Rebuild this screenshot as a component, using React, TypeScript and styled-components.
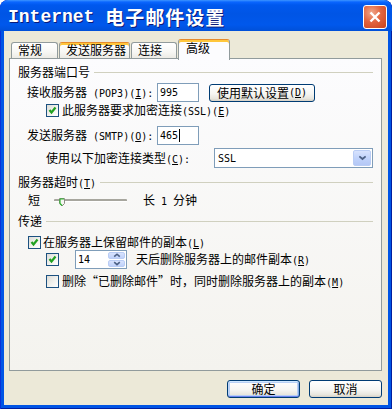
import React from "react";
import styled, { createGlobalStyle, css } from "styled-components";

const Global = createGlobalStyle`
  html, body { margin: 0; padding: 0; background: #ffffff; }
  body { font-family: "Noto Sans CJK SC", sans-serif; font-size: 12px; color: #000; }
`;

const Window = styled.div`
  width: 392px;
  height: 409px;
  box-sizing: border-box;
  background: #0055e5;
  border-radius: 8px 8px 0 0;
  display: flex;
  flex-direction: column;
  overflow: hidden;
  box-shadow: inset 1px 0 0 #0831d9, inset -1px 0 0 #001ea0, inset 0 -1px 0 #001ea0;
`;

const TitleBar = styled.div`
  height: 31px;
  flex: none;
  box-sizing: border-box;
  padding: 2px 5px 0 8px;
  display: flex;
  align-items: center;
  justify-content: space-between;
  background: linear-gradient(
    #3d95ff 0px,
    #0a66ff 2px,
    #0058ee 5px,
    #0055e5 45%,
    #0058ec 80%,
    #0050d8 100%
  );
  border-radius: 8px 8px 0 0;
`;

const Title = styled.div`
  color: #ffffff;
  font-weight: bold;
  text-shadow: 1px 1px 0 #0a1a7a;
  white-space: nowrap;
  display: flex;
  align-items: center;
`;

const TitleLatin = styled.span`
  font-family: "Liberation Mono", monospace;
  font-size: 18px;
  white-space: pre;
`;

const TitleCjk = styled.span`
  font-family: "Noto Sans CJK SC", sans-serif;
  font-size: 19px;
  letter-spacing: 1px;
`;

const CloseButton = styled.div`
  width: 24px;
  height: 24px;
  box-sizing: border-box;
  border: 1px solid #ffffff;
  border-radius: 3px;
  background: radial-gradient(circle at 35% 30%, #f0a88c 0%, #e2643f 45%, #c8421c 100%);
  display: flex;
  align-items: center;
  justify-content: center;
`;

const Client = styled.div`
  flex: 1;
  margin: 0 4px 4px 4px;
  background: #ece9d8;
  box-sizing: border-box;
  padding: 8px 6px 7px 5px;
  display: flex;
  flex-direction: column;
`;

const TabStrip = styled.div`
  height: 19px;
  flex: none;
  display: flex;
  align-items: flex-end;
  gap: 1px;
  padding-left: 2px;
  position: relative;
  z-index: 2;
`;

const Tab = styled.div<{ $active?: boolean; $hot?: boolean; $w: number }>`
  box-sizing: border-box;
  width: ${(p) => p.$w}px;
  height: ${(p) => (p.$active ? 21 : 16)}px;
  margin-bottom: ${(p) => (p.$active ? -2 : 0)}px;
  padding: 0 0 ${(p) => (p.$active ? 4 : 1)}px ${(p) => (p.$active ? 7 : 6)}px;
  border: 1px solid #919b9c;
  border-bottom: none;
  border-radius: 3px 3px 0 0;
  background: ${(p) =>
    p.$active ? "#fcfcfe" : "linear-gradient(#ffffff, #f7f7f4 60%, #ecebe5)"};
  display: flex;
  align-items: center;
  line-height: 1;
  white-space: nowrap;
  ${(p) =>
    (p.$active || p.$hot) &&
    css`
      border-top-color: #e68b2c;
      box-shadow: inset 0 2px 0 #ffc73c;
    `}
`;

const Panel = styled.div`
  height: 313px;
  flex: none;
  box-sizing: border-box;
  border: 1px solid #919b9c;
  background: linear-gradient(#fcfcfe, #f4f3ee);
  padding: 0 8px;
  display: flex;
  flex-direction: column;
  position: relative;
  z-index: 1;
`;

const GroupHeader = styled.div<{ $mt: number }>`
  height: 14px;
  margin-top: ${(p) => p.$mt}px;
  display: flex;
  align-items: center;
  white-space: nowrap;
`;

const GroupLine = styled.div`
  flex: 1;
  height: 1px;
  margin-left: 4px;
  background: #d0d0bf;
`;

const Row = styled.div<{ $h: number; $mt: number; $indent: number }>`
  height: ${(p) => p.$h}px;
  margin-top: ${(p) => p.$mt}px;
  padding-left: ${(p) => p.$indent}px;
  display: flex;
  align-items: center;
  white-space: nowrap;
`;

const Label = styled.span<{ $w?: number; $ml?: number }>`
  flex: none;
  white-space: nowrap;
  line-height: 1;
  ${(p) => (p.$w ? `width: ${p.$w}px;` : "")}
  margin-left: ${(p) => p.$ml ?? 0}px;
`;

const En = styled.span`
  font-family: "DejaVu Sans Mono", monospace;
  font-size: 10px;
  white-space: pre;
`;

const U = styled.span`
  text-decoration: underline;
  text-underline-offset: 1px;
`;

const Fw = styled.span`
  font-feature-settings: "fwid";
`;

const TextBox = styled.div<{ $w: number; $h: number }>`
  width: ${(p) => p.$w}px;
  height: ${(p) => p.$h}px;
  box-sizing: border-box;
  border: 1px solid #7f9db9;
  background: #ffffff;
  padding-left: 2px;
  display: flex;
  align-items: center;
  flex: none;
`;

const Caret = styled.span`
  display: inline-block;
  width: 1px;
  height: 13px;
  background: #000;
  margin-left: 1px;
`;

const XPButton = styled.div<{ $w: number; $h: number; $default?: boolean; $ml?: number }>`
  width: ${(p) => p.$w}px;
  height: ${(p) => p.$h}px;
  margin-left: ${(p) => p.$ml ?? 0}px;
  box-sizing: border-box;
  flex: none;
  border: 1px solid #003c74;
  border-radius: 3px;
  background: linear-gradient(#ffffff 0%, #f6f6f3 55%, #e8e6de 85%, #d6d0c5 100%);
  display: flex;
  align-items: center;
  justify-content: center;
  line-height: 1;
  white-space: nowrap;
  ${(p) =>
    p.$default &&
    css`
      box-shadow: inset 0 1px 0 #cee7ff, inset 0 -1px 0 #6982ee, inset 1px 0 0 #bcd4f6,
        inset -1px 0 0 #89ade4, inset 0 0 0 2px #b9d0f5;
    `}
`;

const Select = styled.div`
  width: 159px;
  height: 20px;
  box-sizing: border-box;
  border: 1px solid #7f9db9;
  background: #ffffff;
  display: flex;
  align-items: center;
  justify-content: space-between;
  padding: 0 1px 0 3px;
  flex: none;
`;

const DropButton = styled.div`
  width: 18px;
  height: 16px;
  box-sizing: border-box;
  border-radius: 2px;
  border: 1px solid #bacdf5;
  background: linear-gradient(#d8e3fd, #c1d3fb 50%, #b4c8f6);
  display: flex;
  align-items: center;
  justify-content: center;
`;

const Track = styled.div`
  width: 73px;
  height: 3px;
  margin-left: 14px;
  border-top: 2px solid #a7a69e;
  border-bottom: 1px solid #ffffff;
  box-sizing: border-box;
  border-radius: 1px;
  position: relative;
  flex: none;
`;

const Thumb = styled.svg`
  position: absolute;
  left: 5px;
  top: -3px;
`;

const CheckBox = styled.span`
  width: 13px;
  height: 13px;
  box-sizing: border-box;
  border: 1px solid #1c5180;
  background: linear-gradient(135deg, #dcdcd7 0%, #f4f4f0 60%, #ffffff 100%);
  display: inline-flex;
  align-items: center;
  justify-content: center;
  flex: none;
`;

const Spinner = styled.div`
  width: 52px;
  height: 19px;
  margin-left: 16px;
  box-sizing: border-box;
  border: 1px solid #7f9db9;
  background: #ffffff;
  display: flex;
  align-items: stretch;
  flex: none;
`;

const SpinText = styled.div`
  flex: 1;
  display: flex;
  align-items: center;
  padding-left: 2px;
`;

const SpinButtons = styled.div`
  width: 17px;
  display: flex;
  flex-direction: column;
  gap: 1px;
  padding: 1px 1px 1px 0;
`;

const SpinButton = styled.div`
  flex: 1;
  border-radius: 2px;
  background: linear-gradient(#d8e3fd, #bfd1fa);
  border: 1px solid #bacdf5;
  box-sizing: border-box;
  display: flex;
  align-items: center;
  justify-content: center;
`;

const Footer = styled.div`
  margin-top: 9px;
  display: flex;
  justify-content: flex-end;
  gap: 9px;
`;

const Check = ({ checked }: { checked?: boolean }) => (
  <CheckBox>
    {checked && (
      <svg width="11" height="11" viewBox="0 0 11 11">
        <polyline
          points="2.5,5 4.5,7.5 8.5,2.5"
          fill="none"
          stroke="#21a121"
          strokeWidth="2.2"
        />
      </svg>
    )}
  </CheckBox>
);

const Chevron = ({ down, size }: { down?: boolean; size: number }) => (
  <svg width={size} height={size * 0.6} viewBox="0 0 10 6">
    <polyline
      points={down ? "1.5,1.5 5,4.5 8.5,1.5" : "1.5,4.5 5,1.5 8.5,4.5"}
      fill="none"
      stroke="#4d6185"
      strokeWidth="2"
    />
  </svg>
);

export default function App() {
  return (
    <>
      <Global />
      <Window>
        <TitleBar>
          <Title>
            <TitleLatin>Internet </TitleLatin>
            <TitleCjk>电子邮件设置</TitleCjk>
          </Title>
          <CloseButton>
            <svg width="14" height="14" viewBox="0 0 14 14">
              <path d="M2.5 2.5 L11.5 11.5 M11.5 2.5 L2.5 11.5" stroke="#ffffff" strokeWidth="2.4" />
            </svg>
          </CloseButton>
        </TitleBar>
        <Client>
          <TabStrip>
            <Tab $w={47}>常规</Tab>
            <Tab $w={71} $hot>发送服务器</Tab>
            <Tab $w={46}>连接</Tab>
            <Tab $w={52} $active>高级</Tab>
          </TabStrip>
          <Panel>
            <GroupHeader $mt={6}>
              <Label>服务器端口号</Label>
              <GroupLine />
            </GroupHeader>
            <Row $h={21} $mt={3} $indent={9}>
              <Label $w={130}>
                接收服务器<En> (POP3)(<U>I</U>):</En>
              </Label>
              <TextBox $w={42} $h={19}>
                <En>995</En>
              </TextBox>
              <XPButton $w={106} $h={18} $ml={10}>
                使用默认设置<En>(<U>D</U>)</En>
              </XPButton>
            </Row>
            <Row $h={14} $mt={0} $indent={28}>
              <Check checked />
              <Label $ml={3}>
                此服务器要求加密连接<En>(SSL)(<U>E</U>)</En>
              </Label>
            </Row>
            <Row $h={20} $mt={8} $indent={9}>
              <Label $w={130}>
                发送服务器<En> (SMTP)(<U>O</U>):</En>
              </Label>
              <TextBox $w={42} $h={19}>
                <En>465</En>
                <Caret />
              </TextBox>
            </Row>
            <Row $h={20} $mt={3} $indent={28}>
              <Label $w={168}>
                使用以下加密连接类型<En>(<U>C</U>):</En>
              </Label>
              <Select>
                <En>SSL</En>
                <DropButton>
                  <Chevron down size={9} />
                </DropButton>
              </Select>
            </Row>
            <GroupHeader $mt={7}>
              <Label>
                服务器超时<En>(<U>T</U>)</En>
              </Label>
              <GroupLine />
            </GroupHeader>
            <Row $h={14} $mt={4} $indent={10}>
              <Label>短</Label>
              <Track>
                <Thumb width="6" height="9" viewBox="0 0 6 9">
                  <path d="M0.5 0.5 H5.5 V5.5 L3 8 L0.5 5.5 Z" fill="#f6f6f2" stroke="#8d8d85" />
                  <path d="M1 1 H5 M1 1 V5.5 M3 7.5 L1 5.5" stroke="#2fb52f" strokeWidth="1.2" fill="none" />
                </Thumb>
              </Track>
              <Label $ml={16}>
                长<En> 1 </En>分钟
              </Label>
            </Row>
            <GroupHeader $mt={7}>
              <Label>传递</Label>
              <GroupLine />
            </GroupHeader>
            <Row $h={14} $mt={7} $indent={10}>
              <Check checked />
              <Label $ml={2}>
                在服务器上保留邮件的副本<En>(<U>L</U>)</En>
              </Label>
            </Row>
            <Row $h={19} $mt={1} $indent={28}>
              <Check checked />
              <Spinner>
                <SpinText>
                  <En>14</En>
                </SpinText>
                <SpinButtons>
                  <SpinButton>
                    <Chevron size={8} />
                  </SpinButton>
                  <SpinButton>
                    <Chevron down size={8} />
                  </SpinButton>
                </SpinButtons>
              </Spinner>
              <Label $ml={9}>
                天后删除服务器上的邮件副本<En>(<U>R</U>)</En>
              </Label>
            </Row>
            <Row $h={14} $mt={5} $indent={28}>
              <Check />
              <Label $ml={3}>
                删除<Fw>“</Fw>已删除邮件<Fw>”</Fw>时，同时删除服务器上的副本<En>(<U>M</U>)</En>
              </Label>
            </Row>
          </Panel>
          <Footer>
            <XPButton $w={73} $h={18} $default>
              确定
            </XPButton>
            <XPButton $w={73} $h={18}>
              取消
            </XPButton>
          </Footer>
        </Client>
      </Window>
    </>
  );
}
